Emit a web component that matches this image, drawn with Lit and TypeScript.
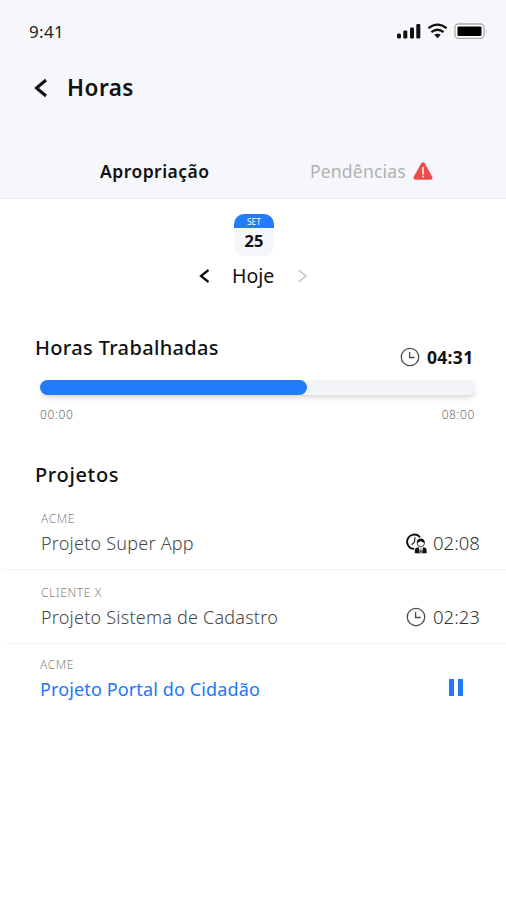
import { LitElement, html, css, svg, nothing } from "lit";
import { customElement, property } from "lit/decorators.js";
import { classMap } from "lit/directives/class-map.js";

interface Project {
  client: string;
  name: string;
  time?: string;
  icon: "clock" | "person" | "pause";
}

const PROJECTS: Project[] = [
  { client: "ACME", name: "Projeto Super App", time: "02:08", icon: "person" },
  { client: "CLIENTE X", name: "Projeto Sistema de Cadastro", time: "02:23", icon: "clock" },
  { client: "ACME", name: "Projeto Portal do Cidadão", icon: "pause" },
];

const clockShape = svg`
  <circle cx="10" cy="10" r="8.700" fill="none" stroke="#4a4a4a" stroke-width="1.300"/>
  <path d="M9.600 5v5.500h5" fill="none" stroke="#4a4a4a" stroke-width="1.300"/>`;

const personShape = svg`
  <path d="M8.200 15.900A7.200 7.200 0 1 1 14 4.300" fill="none" stroke="#111" stroke-width="1.800"/>
  <path d="M9 4.300 8.400 9.200l-2.800 2.500" fill="none" stroke="#222" stroke-width="1.200"/>
  <path d="M8.800 20.300v-3.600q.4-2.200 3.200-2.500h5.600q2.800.4 3 2.600v3.500z" fill="#111"/>
  <path d="M12.700 14h4.400l-1 5.800h-2.400z" fill="#eee"/>
  <path d="M14.900 15l.9 3.700-.9 1.100-.9-1.100z" fill="#222"/>
  <circle cx="14.800" cy="10" r="3.700" fill="#fff" stroke="#333" stroke-width=".9"/>
  <path d="M10.900 9.700q.3-4.300 4-4.300 3.700.2 3.800 4.200-2.400.2-4-1.700-1.400 1.700-3.800 1.800z" fill="#111"/>`;

@customElement("time-icon")
class TimeIcon extends LitElement {
  @property() kind: "clock" | "person" = "clock";
  static styles = css`
    :host { display: block; width: 20px; height: 20px; }
    svg { display: block; overflow: visible; }
  `;
  render() {
    return html`<svg width="20" height="20" viewBox="0 0 20 20">
      ${this.kind === "clock" ? clockShape : personShape}
    </svg>`;
  }
}

@customElement("project-row")
class ProjectRow extends LitElement {
  @property({ attribute: false }) project!: Project;
  static styles = css`
    :host { display: block; }
    .row {
      display: flex; justify-content: space-between; box-sizing: border-box;
      height: 74px; margin-left: 4px; padding: 13px 26px 0 37px;
      border-bottom: 1px solid #f3f3f5;
    }
    .active { border-bottom: 0; padding: 11px 43px 0 36px; }
    .client { font-size: 12px; line-height: 20px; font-weight: 350; color: #858585; letter-spacing: .6px; }
    .name { font-size: 18px; line-height: 24px; margin-top: 2px; font-weight: 320; color: #484848; letter-spacing: .22px; white-space: nowrap; }
    .active .name { color: #2078fa; font-weight: 400; letter-spacing: .13px; }
    .side { display: flex; align-items: center; gap: 7px; height: 24px; margin-top: 22px; }
    .time { font-size: 18.5px; line-height: 24px; font-weight: 300; color: #333; width: 47px; white-space: nowrap; }
    .active .side { gap: 4px; }
    .bar { width: 5px; height: 17px; background: #207afc; margin-top: -3px; }
  `;
  render() {
    const p = this.project;
    const active = p.icon === "pause";
    return html`<div class=${classMap({ row: true, active })}>
      <div>
        <div class="client">${p.client}</div>
        <div class="name">${p.name}</div>
      </div>
      <div class="side">
        ${p.icon === "pause"
          ? html`<div class="bar"></div><div class="bar"></div>`
          : html`<time-icon .kind=${p.icon}></time-icon>`}
        ${p.time ? html`<div class="time">${p.time}</div>` : nothing}
      </div>
    </div>`;
  }
}

@customElement("app-root")
class AppRoot extends LitElement {
  static styles = css`
    :host {
      display: block; height: 900px; overflow: hidden; background: #fff; color: #111;
      font-family: "Noto Sans", "Open Sans", sans-serif;
    }
    svg { display: block; overflow: visible; }
    .header { display: flex; flex-direction: column; box-sizing: border-box; height: 199px; background: #f5f7fb; border-bottom: 1px solid #eef0f3; }
    .status { display: flex; justify-content: space-between; height: 24px; padding: 19px 19px 0 29px; }
    .clock { font-size: 17px; line-height: 26px; color: #222; letter-spacing: .3px; }
    .signals { display: flex; align-items: center; }
    .titlebar { display: flex; align-items: center; gap: 19px; height: 32px; margin-top: 29px; padding-left: 34px; }
    .title { font-size: 22.5px; line-height: 32px; font-weight: 600; letter-spacing: .5px; }
    .tabs { display: flex; height: 26px; margin-top: 54px; padding-left: 100px; line-height: 26px; font-size: 17.5px; }
    .tab { width: 210px; font-weight: 600; letter-spacing: .48px; }
    .tab-muted { display: flex; font-weight: 400; color: #b0b1b4; letter-spacing: .2px; }
    .label-muted { width: 103px; }
    .warning { margin-top: 4px; }
    .day { display: flex; flex-direction: column; align-items: center; padding-top: 15px; }
    .calendar { width: 40px; height: 42px; margin-left: 2px; border-radius: 10px; overflow: hidden; background: #f4f6fa; text-align: center; }
    .month { height: 14px; line-height: 16px; background: #217bfa; color: #fff; font-size: 8.500px; }
    .date { font-size: 16.5px; line-height: 25px; font-weight: 700; }
    .picker { display: flex; align-items: center; height: 28px; margin-top: 6px; gap: 22px; }
    .today { font-size: 19.5px; line-height: 28px; width: 43px; white-space: nowrap; text-indent: .6px; }
    .worked { display: flex; justify-content: space-between; height: 32px; padding: 0 31px 0 35px; margin-top: 43px; }
    .heading { font-size: 20px; line-height: 30px; font-weight: 500; letter-spacing: .34px; white-space: nowrap; }
    .total { display: flex; align-items: center; gap: 7px; height: 24px; margin-top: 12px; }
    .total-time { font-size: 17.5px; line-height: 24px; font-weight: 700; width: 48px; letter-spacing: .3px; white-space: nowrap; }
    .track { height: 15px; margin: 15px 30px 0 40px; border-radius: 8px; background: #f3f4f7; box-shadow: 0 4px 5px -1px #00000024; }
    .fill { height: 100%; border-radius: 8px; background: #217bfb; }
    .scale { display: flex; justify-content: space-between; margin: 11px 31px 0 40px; font-size: 12px; line-height: 18px; font-weight: 300; color: #6c6c6c; letter-spacing: .6px; }
    .projects { padding-left: 35px; margin-top: 36px; letter-spacing: .65px; }
    .list { margin-top: 6px; }
  `;
  render() {
    const progress = 61.3;
    return html`
      <div class="header">
        <div class="status">
          <div class="clock">9:41</div>
          <div class="signals">
            <svg width="90" height="24" viewBox="0 0 90 24">
              <g fill="#111">
                <rect x="0" y="14.500" width="4" height="5" rx="1.500"/>
                <rect x="6.300" y="11.500" width="4" height="8" rx="1.300"/>
                <rect x="13" y="8.500" width="4" height="11" rx="1.300"/>
                <rect x="19.300" y="5" width="4" height="14.500" rx="1.300"/>
              </g>
              <g fill="none" stroke="#111" stroke-width="2.300">
                <path d="M31.400 9.200Q40.500 2 49.600 9.200"/>
                <path d="M34.400 13.100Q40.500 8.300 46.600 13.100"/>
              </g>
              <path d="M37.300 15.800Q40.500 13.700 43.700 15.800L40.500 19.300Z" fill="#111"/>
              <rect x="58" y="5" width="29" height="14.300" rx="3.500" fill="#fff" stroke="#aaa" stroke-width="1.300"/>
              <rect x="60.500" y="7.500" width="24" height="9.500" rx="1" fill="#000"/>
              <path d="M88.800 10v4.400q1.700-2.200 0-4.400" fill="#aaa"/>
            </svg>
          </div>
        </div>
        <div class="titlebar">
          <svg width="14" height="20" viewBox="0 0 14 20"><path d="M12 2 2.500 10 12 18" fill="none" stroke="#111" stroke-width="3"/></svg>
          <div class="title">Horas</div>
        </div>
        <div class="tabs">
          <div class="tab">Apropriação</div>
          <div class="tab-muted">
            <div class="label-muted">Pendências</div>
            <svg class="warning" width="20" height="18" viewBox="0 0 20 18">
              <path d="M8.300 1.200q1.700-2 3.400 0l7.600 13.500q.9 2.600-1.800 3.100h-15Q-.2 17.300.7 14.700z" fill="#ee4d50"/>
              <path d="M10 5v7.500M10 13.800v1.800" stroke="#fff" stroke-width="1.500"/>
            </svg>
          </div>
        </div>
      </div>
      <div class="day">
        <div class="calendar"><div class="month">SET</div><div class="date">25</div></div>
        <div class="picker">
          <svg width="11" height="14" viewBox="0 0 11 14"><path d="M9.500 1 2 7l7.500 6" fill="none" stroke="#111" stroke-width="2.300"/></svg>
          <div class="today">Hoje</div>
          <svg width="11" height="14" viewBox="0 0 11 14"><path d="M1.500 1 9 7l-7.500 6" fill="none" stroke="#ccc" stroke-width="1.800"/></svg>
        </div>
      </div>
      <div class="worked">
        <div class="heading">Horas Trabalhadas</div>
        <div class="total"><time-icon></time-icon><div class="total-time">04:31</div></div>
      </div>
      <div class="track"><div class="fill" style="width:${progress}%"></div></div>
      <div class="scale"><span>00:00</span><span>08:00</span></div>
      <div class="heading projects">Projetos</div>
      <div class="list">${PROJECTS.map((p) => html`<project-row .project=${p}></project-row>`)}</div>
    `;
  }
}
